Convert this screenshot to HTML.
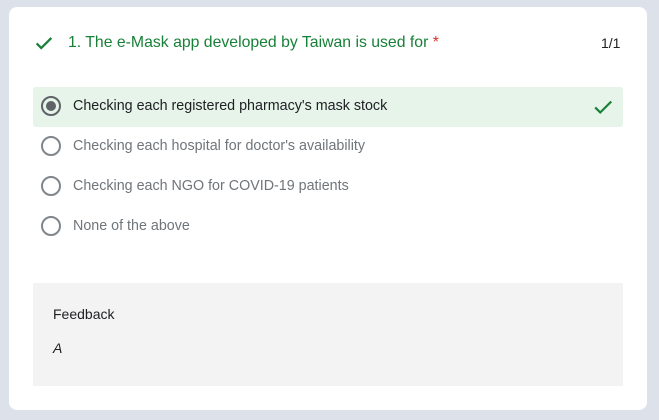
<!DOCTYPE html><html><head><style>
body{margin:0;width:659px;height:420px;background:#dde2ea;font-family:"Liberation Sans",sans-serif;position:relative;overflow:hidden}
.card{position:absolute;left:9px;top:7px;width:638px;height:403px;background:#fff;border-radius:8px}
.t{position:absolute;white-space:nowrap}
.r{position:absolute;left:41px;width:16px;height:16px;border:2px solid #5f6368;border-radius:50%;box-sizing:content-box}
.o{position:absolute;left:73px;font-size:14.3px;color:#70757a;white-space:nowrap}
</style></head><body>
<div class="card"></div>
<svg style="position:absolute;left:33px;top:32px" width="22" height="22" viewBox="0 0 24 24"><path d="M4 12.5l5 5L20 6.5" fill="none" stroke="#188038" stroke-width="2.5"/></svg>
<div class="t" style="left:68px;top:34px;font-size:15.8px;color:#188038">1. The e-Mask app developed by Taiwan is used for <span style="color:#d93025">*</span></div>
<div class="t" style="left:601px;top:35px;font-size:14px;color:#202124">1/1</div>
<div style="position:absolute;left:33px;top:87px;width:590px;height:40px;background:#e6f4ea;border-radius:3px"></div>
<svg style="position:absolute;left:592px;top:96px" width="22" height="22" viewBox="0 0 24 24"><path d="M3.5 12.5l5.5 5.5L21 6" fill="none" stroke="#188038" stroke-width="2.4"/></svg>
<div class="r" style="top:96px"></div><div style="position:absolute;left:46px;top:101px;width:10px;height:10px;border-radius:50%;background:#5f6368"></div>
<div class="o" style="top:98px;color:#202124">Checking each registered pharmacy's mask stock</div>
<div class="r" style="top:136px;border-color:#80868b"></div><div class="o" style="top:138px">Checking each hospital for doctor's availability</div>
<div class="r" style="top:176px;border-color:#80868b"></div><div class="o" style="top:178px">Checking each NGO for COVID-19 patients</div>
<div class="r" style="top:216px;border-color:#80868b"></div><div class="o" style="top:218px">None of the above</div>
<div style="position:absolute;left:33px;top:283px;width:590px;height:103px;background:#f3f3f3"></div>
<div class="t" style="left:53px;top:306px;font-size:14px;color:#202124">Feedback</div>
<div class="t" style="left:53px;top:340px;font-size:14px;font-style:italic;color:#202124">A</div>
</body></html>
